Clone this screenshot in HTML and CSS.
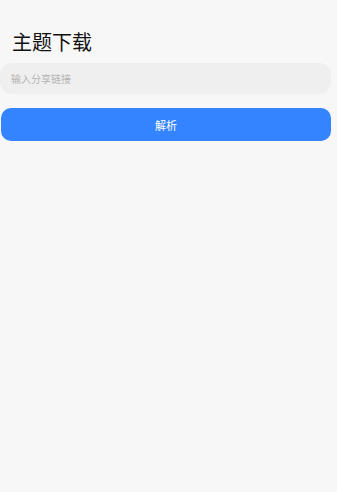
FILE: index.html
```html
<!DOCTYPE html>
<html lang="zh-CN">
<head>
    <meta charset="UTF-8">
    <meta name="viewport" content="width=device-width, initial-scale=1.0">
    <title>主题下载</title>
    <link rel="stylesheet" href="styles.css">
</head>
<body>
    <main class="page">
        <h1 class="title">主题下载</h1>
        <input class="link-input" type="text" placeholder="输入分享链接">
        <button class="btn">解析</button>
    </main>
</body>
</html>
```

FILE: styles.css
```css
* {
    margin: 0;
    padding: 0;
    box-sizing: border-box;
}

body {
    font-family: "Noto Sans CJK SC", "Noto Sans", sans-serif;
    background: #f7f7f7;
    color: #111;
    min-height: 100vh;
}

.page {
    display: flex;
    flex-direction: column;
    padding: 28px 6px 0 1px;
}

.title {
    font-size: 20px;
    font-weight: 400;
    line-height: 28px;
    padding-left: 11px;
    margin-bottom: 7px;
}

.link-input {
    height: 31px;
    border: none;
    outline: none;
    border-radius: 12px;
    background: #efefef;
    padding: 0 11px;
    font-family: inherit;
    font-size: 10px;
    color: #333;
    margin-left: -1px;
    width: calc(100% + 1px);
}

.link-input::placeholder {
    color: #b3b3b3;
}

.btn {
    margin-top: 14px;
    height: 33px;
    width: 100%;
    border: none;
    border-radius: 10px;
    background: #3584ff;
    color: #fff;
    font-family: inherit;
    font-size: 11px;
    cursor: pointer;
}
```
